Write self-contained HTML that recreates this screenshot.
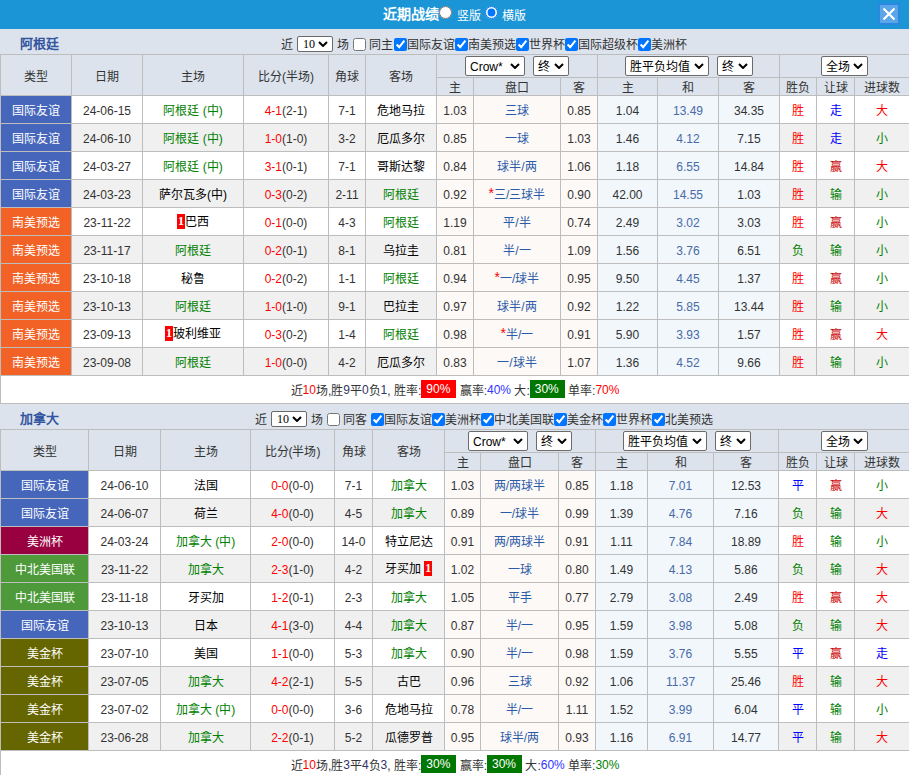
<!DOCTYPE html>
<html lang="zh-CN"><head><meta charset="utf-8"><style>
*{box-sizing:border-box}
html,body{margin:0;padding:0}
body{width:909px;height:775px;overflow:hidden;position:relative;background:#fff;font-family:"Liberation Sans",sans-serif;font-size:12px;color:#333}
.c{position:absolute;border:1px solid #bdbdbd;display:flex;align-items:center;justify-content:center;white-space:nowrap;line-height:14px;padding-top:2px}
.blk{color:#000}
.rc{display:inline-block;background:#f00;color:#fff;font-family:'Liberation Serif',serif;font-weight:bold;font-size:12px;line-height:15px;width:8px;text-align:center;position:relative;top:-1px}
.top{position:absolute;left:0;top:0;width:909px;height:29px;background:#1b95d6;color:#fff}
.ttl{position:absolute;left:383px;top:5px;font-size:14px;font-weight:bold;line-height:18px}
.bar{position:absolute;left:0;width:909px;height:25px;background:#dce3ec}
.tn{position:absolute;left:20px;top:7px;font-size:13px;font-weight:bold;color:#3355a0;line-height:16px}
.flt{position:absolute;top:2px;height:26px;display:flex;align-items:center;white-space:pre;color:#333}
.sel{flex-shrink:0;display:inline-flex;align-items:center;justify-content:flex-start;height:20px;border:1px solid #6b6b6b;border-radius:2px;padding-top:2px;background:#fff;color:#000;padding-left:4px;position:relative;font-size:12px}
.sel svg{position:absolute;right:4px;top:50%;width:10px;height:6px;margin-top:-3px}
input[type=checkbox]{margin:0;width:13px;height:13px;flex-shrink:0}
.sum{position:absolute;left:0;width:910px;height:29px;border:1px solid #bdbdbd;display:flex;align-items:center;justify-content:center;white-space:pre;color:#333}
.t{position:relative;top:-1px}
.ast{color:#f00;font-size:14px;position:relative;top:-2px}
.r{color:#f00}.n{color:#336}
.box{display:inline-block;color:#fff;padding:0 6px 0 5px;line-height:18px;position:relative;top:-1px}
.x{position:absolute;left:878px;top:3px;width:22px;height:22px;background:#5ba5e9;border:2px solid #2a88e0}
</style></head><body>
<div class="top"><span class="ttl">近期战绩</span><input type="radio" style="position:absolute;left:439px;top:6px;margin:0;width:13px;height:13px"><span style="position:absolute;left:457px;top:9px;line-height:14px">竖版</span><input type="radio" checked style="position:absolute;left:485px;top:6px;margin:0;width:13px;height:13px"><span style="position:absolute;left:502px;top:9px;line-height:14px">横版</span><div class="x"><svg width="18" height="18" viewBox="0 0 18 18" style="position:absolute;left:0;top:0"><path d="M3.5 3.5L14.5 14.5M14.5 3.5L3.5 14.5" stroke="#fff" stroke-width="2.2"/></svg></div></div>
<div class="bar" style="top:29px"><span class="tn">阿根廷</span><div class="flt" style="left:281px"><span class="t">近</span><span class="sel" style="margin-left:4px;width:36px;height:16px;font-family:'Liberation Serif',serif;font-size:12px;padding-top:1px;padding-left:5px">10<svg width="10" height="6"><path d="M1 1L5 5L9 1" fill="none" stroke="#000" stroke-width="2"/></svg></span><span class="t" style="margin-left:4px">场</span><input type="checkbox" style="margin-left:4px"><span class="t" style="margin-left:3px">同主</span><input type="checkbox" checked style="margin-left:1px"><span class="t">国际友谊</span><input type="checkbox" checked style="margin-left:0px"><span class="t">南美预选</span><input type="checkbox" checked style="margin-left:0px"><span class="t">世界杯</span><input type="checkbox" checked style="margin-left:0px"><span class="t">国际超级杯</span><input type="checkbox" checked style="margin-left:0px"><span class="t">美洲杯</span></div></div>
<div class="c" style="left:0px;top:54px;width:72px;height:42px;background:#dce3ec;color:#333;padding-top:3px">类型</div><div class="c" style="left:71px;top:54px;width:72px;height:42px;background:#dce3ec;color:#333;padding-top:3px">日期</div><div class="c" style="left:142px;top:54px;width:102px;height:42px;background:#dce3ec;color:#333;padding-top:3px">主场</div><div class="c" style="left:243px;top:54px;width:86px;height:42px;background:#dce3ec;color:#333;padding-top:3px">比分(半场)</div><div class="c" style="left:328px;top:54px;width:38px;height:42px;background:#dce3ec;color:#333;padding-top:3px">角球</div><div class="c" style="left:365px;top:54px;width:72px;height:42px;background:#dce3ec;color:#333;padding-top:3px">客场</div><div class="c" style="left:436px;top:54px;width:162px;height:24px;background:#dce3ec;padding-top:0;"><span class="sel" style="width:60px">Crow*<svg width="10" height="6"><path d="M1 1L5 5L9 1" fill="none" stroke="#000" stroke-width="2"/></svg></span><span class="sel" style="width:36px;margin-left:8px">终<svg width="10" height="6"><path d="M1 1L5 5L9 1" fill="none" stroke="#000" stroke-width="2"/></svg></span></div><div class="c" style="left:597px;top:54px;width:183px;height:24px;background:#dce3ec;padding-top:0;"><span class="sel" style="width:84px">胜平负均值<svg width="10" height="6"><path d="M1 1L5 5L9 1" fill="none" stroke="#000" stroke-width="2"/></svg></span><span class="sel" style="width:36px;margin-left:8px">终<svg width="10" height="6"><path d="M1 1L5 5L9 1" fill="none" stroke="#000" stroke-width="2"/></svg></span></div><div class="c" style="left:779px;top:54px;width:131px;height:24px;background:#dce3ec;padding-top:0;"><span class="sel" style="width:47px">全场<svg width="10" height="6"><path d="M1 1L5 5L9 1" fill="none" stroke="#000" stroke-width="2"/></svg></span></div><div class="c" style="left:436px;top:77px;width:38px;height:19px;background:#dce3ec;color:#333;padding-top:2px">主</div><div class="c" style="left:473px;top:77px;width:88px;height:19px;background:#dce3ec;color:#333;padding-top:2px">盘口</div><div class="c" style="left:560px;top:77px;width:38px;height:19px;background:#dce3ec;color:#333;padding-top:2px">客</div><div class="c" style="left:597px;top:77px;width:61px;height:19px;background:#dce3ec;color:#333;padding-top:2px">主</div><div class="c" style="left:657px;top:77px;width:62px;height:19px;background:#dce3ec;color:#333;padding-top:2px">和</div><div class="c" style="left:718px;top:77px;width:62px;height:19px;background:#dce3ec;color:#333;padding-top:2px">客</div><div class="c" style="left:779px;top:77px;width:38px;height:19px;background:#dce3ec;color:#333;padding-top:2px">胜负</div><div class="c" style="left:816px;top:77px;width:39px;height:19px;background:#dce3ec;color:#333;padding-top:2px">让球</div><div class="c" style="left:854px;top:77px;width:56px;height:19px;background:#dce3ec;color:#333;padding-top:2px">进球数</div><div class="c" style="left:0px;top:95px;width:72px;height:29px;background:#4666bb;color:#fff">国际友谊</div><div class="c" style="left:71px;top:95px;width:72px;height:29px;background:#ffffff;color:#333">24-06-15</div><div class="c" style="left:142px;top:95px;width:102px;height:29px;background:#ffffff;"><span style="color:#008000">阿根廷 (中)</span></div><div class="c" style="left:243px;top:95px;width:86px;height:29px;background:#ffffff;color:#333"><span style="color:#f00">4-1</span>(2-1)</div><div class="c" style="left:328px;top:95px;width:38px;height:29px;background:#ffffff;color:#333">7-1</div><div class="c" style="left:365px;top:95px;width:72px;height:29px;background:#ffffff;"><span class="blk">危地马拉</span></div><div class="c" style="left:436px;top:95px;width:38px;height:29px;background:#fdf9f6;color:#333">1.03</div><div class="c" style="left:473px;top:95px;width:88px;height:29px;background:#fdf9f6;color:#2a5aa8">三球</div><div class="c" style="left:560px;top:95px;width:38px;height:29px;background:#fdf9f6;color:#333">0.85</div><div class="c" style="left:597px;top:95px;width:61px;height:29px;background:#f1f7fb;color:#333">1.04</div><div class="c" style="left:657px;top:95px;width:62px;height:29px;background:#f1f7fb;color:#4a6aa8">13.49</div><div class="c" style="left:718px;top:95px;width:62px;height:29px;background:#f1f7fb;color:#333">34.35</div><div class="c" style="left:779px;top:95px;width:38px;height:29px;background:#ffffff;color:#ff0000">胜</div><div class="c" style="left:816px;top:95px;width:39px;height:29px;background:#ffffff;color:#0000ff">走</div><div class="c" style="left:854px;top:95px;width:56px;height:29px;background:#ffffff;color:#ff0000">大</div><div class="c" style="left:0px;top:123px;width:72px;height:29px;background:#4666bb;color:#fff">国际友谊</div><div class="c" style="left:71px;top:123px;width:72px;height:29px;background:#f0f0f0;color:#333">24-06-10</div><div class="c" style="left:142px;top:123px;width:102px;height:29px;background:#f0f0f0;"><span style="color:#008000">阿根廷 (中)</span></div><div class="c" style="left:243px;top:123px;width:86px;height:29px;background:#f0f0f0;color:#333"><span style="color:#f00">1-0</span>(1-0)</div><div class="c" style="left:328px;top:123px;width:38px;height:29px;background:#f0f0f0;color:#333">3-2</div><div class="c" style="left:365px;top:123px;width:72px;height:29px;background:#f0f0f0;"><span class="blk">厄瓜多尔</span></div><div class="c" style="left:436px;top:123px;width:38px;height:29px;background:#fdf9f6;color:#333">0.85</div><div class="c" style="left:473px;top:123px;width:88px;height:29px;background:#fdf9f6;color:#2a5aa8">一球</div><div class="c" style="left:560px;top:123px;width:38px;height:29px;background:#fdf9f6;color:#333">1.03</div><div class="c" style="left:597px;top:123px;width:61px;height:29px;background:#f1f7fb;color:#333">1.46</div><div class="c" style="left:657px;top:123px;width:62px;height:29px;background:#f1f7fb;color:#4a6aa8">4.12</div><div class="c" style="left:718px;top:123px;width:62px;height:29px;background:#f1f7fb;color:#333">7.15</div><div class="c" style="left:779px;top:123px;width:38px;height:29px;background:#f0f0f0;color:#ff0000">胜</div><div class="c" style="left:816px;top:123px;width:39px;height:29px;background:#f0f0f0;color:#0000ff">走</div><div class="c" style="left:854px;top:123px;width:56px;height:29px;background:#f0f0f0;color:#008000">小</div><div class="c" style="left:0px;top:151px;width:72px;height:29px;background:#4666bb;color:#fff">国际友谊</div><div class="c" style="left:71px;top:151px;width:72px;height:29px;background:#ffffff;color:#333">24-03-27</div><div class="c" style="left:142px;top:151px;width:102px;height:29px;background:#ffffff;"><span style="color:#008000">阿根廷 (中)</span></div><div class="c" style="left:243px;top:151px;width:86px;height:29px;background:#ffffff;color:#333"><span style="color:#f00">3-1</span>(0-1)</div><div class="c" style="left:328px;top:151px;width:38px;height:29px;background:#ffffff;color:#333">7-1</div><div class="c" style="left:365px;top:151px;width:72px;height:29px;background:#ffffff;"><span class="blk">哥斯达黎</span></div><div class="c" style="left:436px;top:151px;width:38px;height:29px;background:#fdf9f6;color:#333">0.84</div><div class="c" style="left:473px;top:151px;width:88px;height:29px;background:#fdf9f6;color:#2a5aa8">球半/两</div><div class="c" style="left:560px;top:151px;width:38px;height:29px;background:#fdf9f6;color:#333">1.06</div><div class="c" style="left:597px;top:151px;width:61px;height:29px;background:#f1f7fb;color:#333">1.18</div><div class="c" style="left:657px;top:151px;width:62px;height:29px;background:#f1f7fb;color:#4a6aa8">6.55</div><div class="c" style="left:718px;top:151px;width:62px;height:29px;background:#f1f7fb;color:#333">14.84</div><div class="c" style="left:779px;top:151px;width:38px;height:29px;background:#ffffff;color:#ff0000">胜</div><div class="c" style="left:816px;top:151px;width:39px;height:29px;background:#ffffff;color:#cc0000">赢</div><div class="c" style="left:854px;top:151px;width:56px;height:29px;background:#ffffff;color:#ff0000">大</div><div class="c" style="left:0px;top:179px;width:72px;height:29px;background:#4666bb;color:#fff">国际友谊</div><div class="c" style="left:71px;top:179px;width:72px;height:29px;background:#f0f0f0;color:#333">24-03-23</div><div class="c" style="left:142px;top:179px;width:102px;height:29px;background:#f0f0f0;"><span class="blk">萨尔瓦多(中)</span></div><div class="c" style="left:243px;top:179px;width:86px;height:29px;background:#f0f0f0;color:#333"><span style="color:#f00">0-3</span>(0-2)</div><div class="c" style="left:328px;top:179px;width:38px;height:29px;background:#f0f0f0;color:#333">2-11</div><div class="c" style="left:365px;top:179px;width:72px;height:29px;background:#f0f0f0;"><span style="color:#008000">阿根廷</span></div><div class="c" style="left:436px;top:179px;width:38px;height:29px;background:#fdf9f6;color:#333">0.92</div><div class="c" style="left:473px;top:179px;width:88px;height:29px;background:#fdf9f6;color:#2a5aa8"><span class="ast">*</span>三/三球半</div><div class="c" style="left:560px;top:179px;width:38px;height:29px;background:#fdf9f6;color:#333">0.90</div><div class="c" style="left:597px;top:179px;width:61px;height:29px;background:#f1f7fb;color:#333">42.00</div><div class="c" style="left:657px;top:179px;width:62px;height:29px;background:#f1f7fb;color:#4a6aa8">14.55</div><div class="c" style="left:718px;top:179px;width:62px;height:29px;background:#f1f7fb;color:#333">1.03</div><div class="c" style="left:779px;top:179px;width:38px;height:29px;background:#f0f0f0;color:#ff0000">胜</div><div class="c" style="left:816px;top:179px;width:39px;height:29px;background:#f0f0f0;color:#008000">输</div><div class="c" style="left:854px;top:179px;width:56px;height:29px;background:#f0f0f0;color:#008000">小</div><div class="c" style="left:0px;top:207px;width:72px;height:29px;background:#f26125;color:#fff">南美预选</div><div class="c" style="left:71px;top:207px;width:72px;height:29px;background:#ffffff;color:#333">23-11-22</div><div class="c" style="left:142px;top:207px;width:102px;height:29px;background:#ffffff;"><span class="blk"><span class="rc">1</span>巴西</span></div><div class="c" style="left:243px;top:207px;width:86px;height:29px;background:#ffffff;color:#333"><span style="color:#f00">0-1</span>(0-0)</div><div class="c" style="left:328px;top:207px;width:38px;height:29px;background:#ffffff;color:#333">4-3</div><div class="c" style="left:365px;top:207px;width:72px;height:29px;background:#ffffff;"><span style="color:#008000">阿根廷</span></div><div class="c" style="left:436px;top:207px;width:38px;height:29px;background:#fdf9f6;color:#333">1.19</div><div class="c" style="left:473px;top:207px;width:88px;height:29px;background:#fdf9f6;color:#2a5aa8">平/半</div><div class="c" style="left:560px;top:207px;width:38px;height:29px;background:#fdf9f6;color:#333">0.74</div><div class="c" style="left:597px;top:207px;width:61px;height:29px;background:#f1f7fb;color:#333">2.49</div><div class="c" style="left:657px;top:207px;width:62px;height:29px;background:#f1f7fb;color:#4a6aa8">3.02</div><div class="c" style="left:718px;top:207px;width:62px;height:29px;background:#f1f7fb;color:#333">3.03</div><div class="c" style="left:779px;top:207px;width:38px;height:29px;background:#ffffff;color:#ff0000">胜</div><div class="c" style="left:816px;top:207px;width:39px;height:29px;background:#ffffff;color:#cc0000">赢</div><div class="c" style="left:854px;top:207px;width:56px;height:29px;background:#ffffff;color:#008000">小</div><div class="c" style="left:0px;top:235px;width:72px;height:29px;background:#f26125;color:#fff">南美预选</div><div class="c" style="left:71px;top:235px;width:72px;height:29px;background:#f0f0f0;color:#333">23-11-17</div><div class="c" style="left:142px;top:235px;width:102px;height:29px;background:#f0f0f0;"><span style="color:#008000">阿根廷</span></div><div class="c" style="left:243px;top:235px;width:86px;height:29px;background:#f0f0f0;color:#333"><span style="color:#f00">0-2</span>(0-1)</div><div class="c" style="left:328px;top:235px;width:38px;height:29px;background:#f0f0f0;color:#333">8-1</div><div class="c" style="left:365px;top:235px;width:72px;height:29px;background:#f0f0f0;"><span class="blk">乌拉圭</span></div><div class="c" style="left:436px;top:235px;width:38px;height:29px;background:#fdf9f6;color:#333">0.81</div><div class="c" style="left:473px;top:235px;width:88px;height:29px;background:#fdf9f6;color:#2a5aa8">半/一</div><div class="c" style="left:560px;top:235px;width:38px;height:29px;background:#fdf9f6;color:#333">1.09</div><div class="c" style="left:597px;top:235px;width:61px;height:29px;background:#f1f7fb;color:#333">1.56</div><div class="c" style="left:657px;top:235px;width:62px;height:29px;background:#f1f7fb;color:#4a6aa8">3.76</div><div class="c" style="left:718px;top:235px;width:62px;height:29px;background:#f1f7fb;color:#333">6.51</div><div class="c" style="left:779px;top:235px;width:38px;height:29px;background:#f0f0f0;color:#008000">负</div><div class="c" style="left:816px;top:235px;width:39px;height:29px;background:#f0f0f0;color:#008000">输</div><div class="c" style="left:854px;top:235px;width:56px;height:29px;background:#f0f0f0;color:#008000">小</div><div class="c" style="left:0px;top:263px;width:72px;height:29px;background:#f26125;color:#fff">南美预选</div><div class="c" style="left:71px;top:263px;width:72px;height:29px;background:#ffffff;color:#333">23-10-18</div><div class="c" style="left:142px;top:263px;width:102px;height:29px;background:#ffffff;"><span class="blk">秘鲁</span></div><div class="c" style="left:243px;top:263px;width:86px;height:29px;background:#ffffff;color:#333"><span style="color:#f00">0-2</span>(0-2)</div><div class="c" style="left:328px;top:263px;width:38px;height:29px;background:#ffffff;color:#333">1-1</div><div class="c" style="left:365px;top:263px;width:72px;height:29px;background:#ffffff;"><span style="color:#008000">阿根廷</span></div><div class="c" style="left:436px;top:263px;width:38px;height:29px;background:#fdf9f6;color:#333">0.94</div><div class="c" style="left:473px;top:263px;width:88px;height:29px;background:#fdf9f6;color:#2a5aa8"><span class="ast">*</span>一/球半</div><div class="c" style="left:560px;top:263px;width:38px;height:29px;background:#fdf9f6;color:#333">0.95</div><div class="c" style="left:597px;top:263px;width:61px;height:29px;background:#f1f7fb;color:#333">9.50</div><div class="c" style="left:657px;top:263px;width:62px;height:29px;background:#f1f7fb;color:#4a6aa8">4.45</div><div class="c" style="left:718px;top:263px;width:62px;height:29px;background:#f1f7fb;color:#333">1.37</div><div class="c" style="left:779px;top:263px;width:38px;height:29px;background:#ffffff;color:#ff0000">胜</div><div class="c" style="left:816px;top:263px;width:39px;height:29px;background:#ffffff;color:#cc0000">赢</div><div class="c" style="left:854px;top:263px;width:56px;height:29px;background:#ffffff;color:#008000">小</div><div class="c" style="left:0px;top:291px;width:72px;height:29px;background:#f26125;color:#fff">南美预选</div><div class="c" style="left:71px;top:291px;width:72px;height:29px;background:#f0f0f0;color:#333">23-10-13</div><div class="c" style="left:142px;top:291px;width:102px;height:29px;background:#f0f0f0;"><span style="color:#008000">阿根廷</span></div><div class="c" style="left:243px;top:291px;width:86px;height:29px;background:#f0f0f0;color:#333"><span style="color:#f00">1-0</span>(1-0)</div><div class="c" style="left:328px;top:291px;width:38px;height:29px;background:#f0f0f0;color:#333">9-1</div><div class="c" style="left:365px;top:291px;width:72px;height:29px;background:#f0f0f0;"><span class="blk">巴拉圭</span></div><div class="c" style="left:436px;top:291px;width:38px;height:29px;background:#fdf9f6;color:#333">0.97</div><div class="c" style="left:473px;top:291px;width:88px;height:29px;background:#fdf9f6;color:#2a5aa8">球半/两</div><div class="c" style="left:560px;top:291px;width:38px;height:29px;background:#fdf9f6;color:#333">0.92</div><div class="c" style="left:597px;top:291px;width:61px;height:29px;background:#f1f7fb;color:#333">1.22</div><div class="c" style="left:657px;top:291px;width:62px;height:29px;background:#f1f7fb;color:#4a6aa8">5.85</div><div class="c" style="left:718px;top:291px;width:62px;height:29px;background:#f1f7fb;color:#333">13.44</div><div class="c" style="left:779px;top:291px;width:38px;height:29px;background:#f0f0f0;color:#ff0000">胜</div><div class="c" style="left:816px;top:291px;width:39px;height:29px;background:#f0f0f0;color:#008000">输</div><div class="c" style="left:854px;top:291px;width:56px;height:29px;background:#f0f0f0;color:#008000">小</div><div class="c" style="left:0px;top:319px;width:72px;height:29px;background:#f26125;color:#fff">南美预选</div><div class="c" style="left:71px;top:319px;width:72px;height:29px;background:#ffffff;color:#333">23-09-13</div><div class="c" style="left:142px;top:319px;width:102px;height:29px;background:#ffffff;"><span class="blk"><span class="rc">1</span>玻利维亚</span></div><div class="c" style="left:243px;top:319px;width:86px;height:29px;background:#ffffff;color:#333"><span style="color:#f00">0-3</span>(0-2)</div><div class="c" style="left:328px;top:319px;width:38px;height:29px;background:#ffffff;color:#333">1-4</div><div class="c" style="left:365px;top:319px;width:72px;height:29px;background:#ffffff;"><span style="color:#008000">阿根廷</span></div><div class="c" style="left:436px;top:319px;width:38px;height:29px;background:#fdf9f6;color:#333">0.98</div><div class="c" style="left:473px;top:319px;width:88px;height:29px;background:#fdf9f6;color:#2a5aa8"><span class="ast">*</span>半/一</div><div class="c" style="left:560px;top:319px;width:38px;height:29px;background:#fdf9f6;color:#333">0.91</div><div class="c" style="left:597px;top:319px;width:61px;height:29px;background:#f1f7fb;color:#333">5.90</div><div class="c" style="left:657px;top:319px;width:62px;height:29px;background:#f1f7fb;color:#4a6aa8">3.93</div><div class="c" style="left:718px;top:319px;width:62px;height:29px;background:#f1f7fb;color:#333">1.57</div><div class="c" style="left:779px;top:319px;width:38px;height:29px;background:#ffffff;color:#ff0000">胜</div><div class="c" style="left:816px;top:319px;width:39px;height:29px;background:#ffffff;color:#cc0000">赢</div><div class="c" style="left:854px;top:319px;width:56px;height:29px;background:#ffffff;color:#ff0000">大</div><div class="c" style="left:0px;top:347px;width:72px;height:29px;background:#f26125;color:#fff">南美预选</div><div class="c" style="left:71px;top:347px;width:72px;height:29px;background:#f0f0f0;color:#333">23-09-08</div><div class="c" style="left:142px;top:347px;width:102px;height:29px;background:#f0f0f0;"><span style="color:#008000">阿根廷</span></div><div class="c" style="left:243px;top:347px;width:86px;height:29px;background:#f0f0f0;color:#333"><span style="color:#f00">1-0</span>(0-0)</div><div class="c" style="left:328px;top:347px;width:38px;height:29px;background:#f0f0f0;color:#333">4-2</div><div class="c" style="left:365px;top:347px;width:72px;height:29px;background:#f0f0f0;"><span class="blk">厄瓜多尔</span></div><div class="c" style="left:436px;top:347px;width:38px;height:29px;background:#fdf9f6;color:#333">0.83</div><div class="c" style="left:473px;top:347px;width:88px;height:29px;background:#fdf9f6;color:#2a5aa8">一/球半</div><div class="c" style="left:560px;top:347px;width:38px;height:29px;background:#fdf9f6;color:#333">1.07</div><div class="c" style="left:597px;top:347px;width:61px;height:29px;background:#f1f7fb;color:#333">1.36</div><div class="c" style="left:657px;top:347px;width:62px;height:29px;background:#f1f7fb;color:#4a6aa8">4.52</div><div class="c" style="left:718px;top:347px;width:62px;height:29px;background:#f1f7fb;color:#333">9.66</div><div class="c" style="left:779px;top:347px;width:38px;height:29px;background:#f0f0f0;color:#ff0000">胜</div><div class="c" style="left:816px;top:347px;width:39px;height:29px;background:#f0f0f0;color:#008000">输</div><div class="c" style="left:854px;top:347px;width:56px;height:29px;background:#f0f0f0;color:#008000">小</div><div class="c" style="left:0px;top:429px;width:89px;height:42px;background:#dce3ec;color:#333;padding-top:3px">类型</div><div class="c" style="left:88px;top:429px;width:73px;height:42px;background:#dce3ec;color:#333;padding-top:3px">日期</div><div class="c" style="left:160px;top:429px;width:91px;height:42px;background:#dce3ec;color:#333;padding-top:3px">主场</div><div class="c" style="left:250px;top:429px;width:85px;height:42px;background:#dce3ec;color:#333;padding-top:3px">比分(半场)</div><div class="c" style="left:334px;top:429px;width:39px;height:42px;background:#dce3ec;color:#333;padding-top:3px">角球</div><div class="c" style="left:372px;top:429px;width:73px;height:42px;background:#dce3ec;color:#333;padding-top:3px">客场</div><div class="c" style="left:444px;top:429px;width:152px;height:24px;background:#dce3ec;padding-top:0;"><span class="sel" style="width:60px">Crow*<svg width="10" height="6"><path d="M1 1L5 5L9 1" fill="none" stroke="#000" stroke-width="2"/></svg></span><span class="sel" style="width:36px;margin-left:8px">终<svg width="10" height="6"><path d="M1 1L5 5L9 1" fill="none" stroke="#000" stroke-width="2"/></svg></span></div><div class="c" style="left:595px;top:429px;width:184px;height:24px;background:#dce3ec;padding-top:0;"><span class="sel" style="width:84px">胜平负均值<svg width="10" height="6"><path d="M1 1L5 5L9 1" fill="none" stroke="#000" stroke-width="2"/></svg></span><span class="sel" style="width:36px;margin-left:8px">终<svg width="10" height="6"><path d="M1 1L5 5L9 1" fill="none" stroke="#000" stroke-width="2"/></svg></span></div><div class="c" style="left:778px;top:429px;width:132px;height:24px;background:#dce3ec;padding-top:0;"><span class="sel" style="width:47px">全场<svg width="10" height="6"><path d="M1 1L5 5L9 1" fill="none" stroke="#000" stroke-width="2"/></svg></span></div><div class="c" style="left:444px;top:452px;width:37px;height:19px;background:#dce3ec;color:#333;padding-top:2px">主</div><div class="c" style="left:480px;top:452px;width:79px;height:19px;background:#dce3ec;color:#333;padding-top:2px">盘口</div><div class="c" style="left:558px;top:452px;width:38px;height:19px;background:#dce3ec;color:#333;padding-top:2px">客</div><div class="c" style="left:595px;top:452px;width:53px;height:19px;background:#dce3ec;color:#333;padding-top:2px">主</div><div class="c" style="left:647px;top:452px;width:67px;height:19px;background:#dce3ec;color:#333;padding-top:2px">和</div><div class="c" style="left:713px;top:452px;width:66px;height:19px;background:#dce3ec;color:#333;padding-top:2px">客</div><div class="c" style="left:778px;top:452px;width:39px;height:19px;background:#dce3ec;color:#333;padding-top:2px">胜负</div><div class="c" style="left:816px;top:452px;width:39px;height:19px;background:#dce3ec;color:#333;padding-top:2px">让球</div><div class="c" style="left:854px;top:452px;width:56px;height:19px;background:#dce3ec;color:#333;padding-top:2px">进球数</div><div class="c" style="left:0px;top:470px;width:89px;height:29px;background:#4666bb;color:#fff">国际友谊</div><div class="c" style="left:88px;top:470px;width:73px;height:29px;background:#ffffff;color:#333">24-06-10</div><div class="c" style="left:160px;top:470px;width:91px;height:29px;background:#ffffff;"><span class="blk">法国</span></div><div class="c" style="left:250px;top:470px;width:85px;height:29px;background:#ffffff;color:#333"><span style="color:#f00">0-0</span>(0-0)</div><div class="c" style="left:334px;top:470px;width:39px;height:29px;background:#ffffff;color:#333">7-1</div><div class="c" style="left:372px;top:470px;width:73px;height:29px;background:#ffffff;"><span style="color:#008000">加拿大</span></div><div class="c" style="left:444px;top:470px;width:37px;height:29px;background:#fdf9f6;color:#333">1.03</div><div class="c" style="left:480px;top:470px;width:79px;height:29px;background:#fdf9f6;color:#2a5aa8">两/两球半</div><div class="c" style="left:558px;top:470px;width:38px;height:29px;background:#fdf9f6;color:#333">0.85</div><div class="c" style="left:595px;top:470px;width:53px;height:29px;background:#f1f7fb;color:#333">1.18</div><div class="c" style="left:647px;top:470px;width:67px;height:29px;background:#f1f7fb;color:#4a6aa8">7.01</div><div class="c" style="left:713px;top:470px;width:66px;height:29px;background:#f1f7fb;color:#333">12.53</div><div class="c" style="left:778px;top:470px;width:39px;height:29px;background:#ffffff;color:#0000ff">平</div><div class="c" style="left:816px;top:470px;width:39px;height:29px;background:#ffffff;color:#cc0000">赢</div><div class="c" style="left:854px;top:470px;width:56px;height:29px;background:#ffffff;color:#008000">小</div><div class="c" style="left:0px;top:498px;width:89px;height:29px;background:#4666bb;color:#fff">国际友谊</div><div class="c" style="left:88px;top:498px;width:73px;height:29px;background:#f0f0f0;color:#333">24-06-07</div><div class="c" style="left:160px;top:498px;width:91px;height:29px;background:#f0f0f0;"><span class="blk">荷兰</span></div><div class="c" style="left:250px;top:498px;width:85px;height:29px;background:#f0f0f0;color:#333"><span style="color:#f00">4-0</span>(0-0)</div><div class="c" style="left:334px;top:498px;width:39px;height:29px;background:#f0f0f0;color:#333">4-5</div><div class="c" style="left:372px;top:498px;width:73px;height:29px;background:#f0f0f0;"><span style="color:#008000">加拿大</span></div><div class="c" style="left:444px;top:498px;width:37px;height:29px;background:#fdf9f6;color:#333">0.89</div><div class="c" style="left:480px;top:498px;width:79px;height:29px;background:#fdf9f6;color:#2a5aa8">一/球半</div><div class="c" style="left:558px;top:498px;width:38px;height:29px;background:#fdf9f6;color:#333">0.99</div><div class="c" style="left:595px;top:498px;width:53px;height:29px;background:#f1f7fb;color:#333">1.39</div><div class="c" style="left:647px;top:498px;width:67px;height:29px;background:#f1f7fb;color:#4a6aa8">4.76</div><div class="c" style="left:713px;top:498px;width:66px;height:29px;background:#f1f7fb;color:#333">7.16</div><div class="c" style="left:778px;top:498px;width:39px;height:29px;background:#f0f0f0;color:#008000">负</div><div class="c" style="left:816px;top:498px;width:39px;height:29px;background:#f0f0f0;color:#008000">输</div><div class="c" style="left:854px;top:498px;width:56px;height:29px;background:#f0f0f0;color:#ff0000">大</div><div class="c" style="left:0px;top:526px;width:89px;height:29px;background:#990040;color:#fff">美洲杯</div><div class="c" style="left:88px;top:526px;width:73px;height:29px;background:#ffffff;color:#333">24-03-24</div><div class="c" style="left:160px;top:526px;width:91px;height:29px;background:#ffffff;"><span style="color:#008000">加拿大 (中)</span></div><div class="c" style="left:250px;top:526px;width:85px;height:29px;background:#ffffff;color:#333"><span style="color:#f00">2-0</span>(0-0)</div><div class="c" style="left:334px;top:526px;width:39px;height:29px;background:#ffffff;color:#333">14-0</div><div class="c" style="left:372px;top:526px;width:73px;height:29px;background:#ffffff;"><span class="blk">特立尼达</span></div><div class="c" style="left:444px;top:526px;width:37px;height:29px;background:#fdf9f6;color:#333">0.91</div><div class="c" style="left:480px;top:526px;width:79px;height:29px;background:#fdf9f6;color:#2a5aa8">两/两球半</div><div class="c" style="left:558px;top:526px;width:38px;height:29px;background:#fdf9f6;color:#333">0.91</div><div class="c" style="left:595px;top:526px;width:53px;height:29px;background:#f1f7fb;color:#333">1.11</div><div class="c" style="left:647px;top:526px;width:67px;height:29px;background:#f1f7fb;color:#4a6aa8">7.84</div><div class="c" style="left:713px;top:526px;width:66px;height:29px;background:#f1f7fb;color:#333">18.89</div><div class="c" style="left:778px;top:526px;width:39px;height:29px;background:#ffffff;color:#ff0000">胜</div><div class="c" style="left:816px;top:526px;width:39px;height:29px;background:#ffffff;color:#008000">输</div><div class="c" style="left:854px;top:526px;width:56px;height:29px;background:#ffffff;color:#008000">小</div><div class="c" style="left:0px;top:554px;width:89px;height:29px;background:#4e9a3a;color:#fff">中北美国联</div><div class="c" style="left:88px;top:554px;width:73px;height:29px;background:#f0f0f0;color:#333">23-11-22</div><div class="c" style="left:160px;top:554px;width:91px;height:29px;background:#f0f0f0;"><span style="color:#008000">加拿大</span></div><div class="c" style="left:250px;top:554px;width:85px;height:29px;background:#f0f0f0;color:#333"><span style="color:#f00">2-3</span>(1-0)</div><div class="c" style="left:334px;top:554px;width:39px;height:29px;background:#f0f0f0;color:#333">4-2</div><div class="c" style="left:372px;top:554px;width:73px;height:29px;background:#f0f0f0;"><span class="blk">牙买加 <span class="rc">1</span></span></div><div class="c" style="left:444px;top:554px;width:37px;height:29px;background:#fdf9f6;color:#333">1.02</div><div class="c" style="left:480px;top:554px;width:79px;height:29px;background:#fdf9f6;color:#2a5aa8">一球</div><div class="c" style="left:558px;top:554px;width:38px;height:29px;background:#fdf9f6;color:#333">0.80</div><div class="c" style="left:595px;top:554px;width:53px;height:29px;background:#f1f7fb;color:#333">1.49</div><div class="c" style="left:647px;top:554px;width:67px;height:29px;background:#f1f7fb;color:#4a6aa8">4.13</div><div class="c" style="left:713px;top:554px;width:66px;height:29px;background:#f1f7fb;color:#333">5.86</div><div class="c" style="left:778px;top:554px;width:39px;height:29px;background:#f0f0f0;color:#008000">负</div><div class="c" style="left:816px;top:554px;width:39px;height:29px;background:#f0f0f0;color:#008000">输</div><div class="c" style="left:854px;top:554px;width:56px;height:29px;background:#f0f0f0;color:#ff0000">大</div><div class="c" style="left:0px;top:582px;width:89px;height:29px;background:#4e9a3a;color:#fff">中北美国联</div><div class="c" style="left:88px;top:582px;width:73px;height:29px;background:#ffffff;color:#333">23-11-18</div><div class="c" style="left:160px;top:582px;width:91px;height:29px;background:#ffffff;"><span class="blk">牙买加</span></div><div class="c" style="left:250px;top:582px;width:85px;height:29px;background:#ffffff;color:#333"><span style="color:#f00">1-2</span>(0-1)</div><div class="c" style="left:334px;top:582px;width:39px;height:29px;background:#ffffff;color:#333">2-3</div><div class="c" style="left:372px;top:582px;width:73px;height:29px;background:#ffffff;"><span style="color:#008000">加拿大</span></div><div class="c" style="left:444px;top:582px;width:37px;height:29px;background:#fdf9f6;color:#333">1.05</div><div class="c" style="left:480px;top:582px;width:79px;height:29px;background:#fdf9f6;color:#2a5aa8">平手</div><div class="c" style="left:558px;top:582px;width:38px;height:29px;background:#fdf9f6;color:#333">0.77</div><div class="c" style="left:595px;top:582px;width:53px;height:29px;background:#f1f7fb;color:#333">2.79</div><div class="c" style="left:647px;top:582px;width:67px;height:29px;background:#f1f7fb;color:#4a6aa8">3.08</div><div class="c" style="left:713px;top:582px;width:66px;height:29px;background:#f1f7fb;color:#333">2.49</div><div class="c" style="left:778px;top:582px;width:39px;height:29px;background:#ffffff;color:#ff0000">胜</div><div class="c" style="left:816px;top:582px;width:39px;height:29px;background:#ffffff;color:#cc0000">赢</div><div class="c" style="left:854px;top:582px;width:56px;height:29px;background:#ffffff;color:#ff0000">大</div><div class="c" style="left:0px;top:610px;width:89px;height:29px;background:#4666bb;color:#fff">国际友谊</div><div class="c" style="left:88px;top:610px;width:73px;height:29px;background:#f0f0f0;color:#333">23-10-13</div><div class="c" style="left:160px;top:610px;width:91px;height:29px;background:#f0f0f0;"><span class="blk">日本</span></div><div class="c" style="left:250px;top:610px;width:85px;height:29px;background:#f0f0f0;color:#333"><span style="color:#f00">4-1</span>(3-0)</div><div class="c" style="left:334px;top:610px;width:39px;height:29px;background:#f0f0f0;color:#333">4-4</div><div class="c" style="left:372px;top:610px;width:73px;height:29px;background:#f0f0f0;"><span style="color:#008000">加拿大</span></div><div class="c" style="left:444px;top:610px;width:37px;height:29px;background:#fdf9f6;color:#333">0.87</div><div class="c" style="left:480px;top:610px;width:79px;height:29px;background:#fdf9f6;color:#2a5aa8">半/一</div><div class="c" style="left:558px;top:610px;width:38px;height:29px;background:#fdf9f6;color:#333">0.95</div><div class="c" style="left:595px;top:610px;width:53px;height:29px;background:#f1f7fb;color:#333">1.59</div><div class="c" style="left:647px;top:610px;width:67px;height:29px;background:#f1f7fb;color:#4a6aa8">3.98</div><div class="c" style="left:713px;top:610px;width:66px;height:29px;background:#f1f7fb;color:#333">5.08</div><div class="c" style="left:778px;top:610px;width:39px;height:29px;background:#f0f0f0;color:#008000">负</div><div class="c" style="left:816px;top:610px;width:39px;height:29px;background:#f0f0f0;color:#008000">输</div><div class="c" style="left:854px;top:610px;width:56px;height:29px;background:#f0f0f0;color:#ff0000">大</div><div class="c" style="left:0px;top:638px;width:89px;height:29px;background:#666600;color:#fff">美金杯</div><div class="c" style="left:88px;top:638px;width:73px;height:29px;background:#ffffff;color:#333">23-07-10</div><div class="c" style="left:160px;top:638px;width:91px;height:29px;background:#ffffff;"><span class="blk">美国</span></div><div class="c" style="left:250px;top:638px;width:85px;height:29px;background:#ffffff;color:#333"><span style="color:#f00">1-1</span>(0-0)</div><div class="c" style="left:334px;top:638px;width:39px;height:29px;background:#ffffff;color:#333">5-3</div><div class="c" style="left:372px;top:638px;width:73px;height:29px;background:#ffffff;"><span style="color:#008000">加拿大</span></div><div class="c" style="left:444px;top:638px;width:37px;height:29px;background:#fdf9f6;color:#333">0.90</div><div class="c" style="left:480px;top:638px;width:79px;height:29px;background:#fdf9f6;color:#2a5aa8">半/一</div><div class="c" style="left:558px;top:638px;width:38px;height:29px;background:#fdf9f6;color:#333">0.98</div><div class="c" style="left:595px;top:638px;width:53px;height:29px;background:#f1f7fb;color:#333">1.59</div><div class="c" style="left:647px;top:638px;width:67px;height:29px;background:#f1f7fb;color:#4a6aa8">3.76</div><div class="c" style="left:713px;top:638px;width:66px;height:29px;background:#f1f7fb;color:#333">5.55</div><div class="c" style="left:778px;top:638px;width:39px;height:29px;background:#ffffff;color:#0000ff">平</div><div class="c" style="left:816px;top:638px;width:39px;height:29px;background:#ffffff;color:#cc0000">赢</div><div class="c" style="left:854px;top:638px;width:56px;height:29px;background:#ffffff;color:#0000ff">走</div><div class="c" style="left:0px;top:666px;width:89px;height:29px;background:#666600;color:#fff">美金杯</div><div class="c" style="left:88px;top:666px;width:73px;height:29px;background:#f0f0f0;color:#333">23-07-05</div><div class="c" style="left:160px;top:666px;width:91px;height:29px;background:#f0f0f0;"><span style="color:#008000">加拿大</span></div><div class="c" style="left:250px;top:666px;width:85px;height:29px;background:#f0f0f0;color:#333"><span style="color:#f00">4-2</span>(2-1)</div><div class="c" style="left:334px;top:666px;width:39px;height:29px;background:#f0f0f0;color:#333">5-5</div><div class="c" style="left:372px;top:666px;width:73px;height:29px;background:#f0f0f0;"><span class="blk">古巴</span></div><div class="c" style="left:444px;top:666px;width:37px;height:29px;background:#fdf9f6;color:#333">0.96</div><div class="c" style="left:480px;top:666px;width:79px;height:29px;background:#fdf9f6;color:#2a5aa8">三球</div><div class="c" style="left:558px;top:666px;width:38px;height:29px;background:#fdf9f6;color:#333">0.92</div><div class="c" style="left:595px;top:666px;width:53px;height:29px;background:#f1f7fb;color:#333">1.06</div><div class="c" style="left:647px;top:666px;width:67px;height:29px;background:#f1f7fb;color:#4a6aa8">11.37</div><div class="c" style="left:713px;top:666px;width:66px;height:29px;background:#f1f7fb;color:#333">25.46</div><div class="c" style="left:778px;top:666px;width:39px;height:29px;background:#f0f0f0;color:#ff0000">胜</div><div class="c" style="left:816px;top:666px;width:39px;height:29px;background:#f0f0f0;color:#008000">输</div><div class="c" style="left:854px;top:666px;width:56px;height:29px;background:#f0f0f0;color:#ff0000">大</div><div class="c" style="left:0px;top:694px;width:89px;height:29px;background:#666600;color:#fff">美金杯</div><div class="c" style="left:88px;top:694px;width:73px;height:29px;background:#ffffff;color:#333">23-07-02</div><div class="c" style="left:160px;top:694px;width:91px;height:29px;background:#ffffff;"><span style="color:#008000">加拿大 (中)</span></div><div class="c" style="left:250px;top:694px;width:85px;height:29px;background:#ffffff;color:#333"><span style="color:#f00">0-0</span>(0-0)</div><div class="c" style="left:334px;top:694px;width:39px;height:29px;background:#ffffff;color:#333">3-6</div><div class="c" style="left:372px;top:694px;width:73px;height:29px;background:#ffffff;"><span class="blk">危地马拉</span></div><div class="c" style="left:444px;top:694px;width:37px;height:29px;background:#fdf9f6;color:#333">0.78</div><div class="c" style="left:480px;top:694px;width:79px;height:29px;background:#fdf9f6;color:#2a5aa8">半/一</div><div class="c" style="left:558px;top:694px;width:38px;height:29px;background:#fdf9f6;color:#333">1.11</div><div class="c" style="left:595px;top:694px;width:53px;height:29px;background:#f1f7fb;color:#333">1.52</div><div class="c" style="left:647px;top:694px;width:67px;height:29px;background:#f1f7fb;color:#4a6aa8">3.99</div><div class="c" style="left:713px;top:694px;width:66px;height:29px;background:#f1f7fb;color:#333">6.04</div><div class="c" style="left:778px;top:694px;width:39px;height:29px;background:#ffffff;color:#0000ff">平</div><div class="c" style="left:816px;top:694px;width:39px;height:29px;background:#ffffff;color:#008000">输</div><div class="c" style="left:854px;top:694px;width:56px;height:29px;background:#ffffff;color:#008000">小</div><div class="c" style="left:0px;top:722px;width:89px;height:29px;background:#666600;color:#fff">美金杯</div><div class="c" style="left:88px;top:722px;width:73px;height:29px;background:#f0f0f0;color:#333">23-06-28</div><div class="c" style="left:160px;top:722px;width:91px;height:29px;background:#f0f0f0;"><span style="color:#008000">加拿大</span></div><div class="c" style="left:250px;top:722px;width:85px;height:29px;background:#f0f0f0;color:#333"><span style="color:#f00">2-2</span>(0-1)</div><div class="c" style="left:334px;top:722px;width:39px;height:29px;background:#f0f0f0;color:#333">5-2</div><div class="c" style="left:372px;top:722px;width:73px;height:29px;background:#f0f0f0;"><span class="blk">瓜德罗普</span></div><div class="c" style="left:444px;top:722px;width:37px;height:29px;background:#fdf9f6;color:#333">0.95</div><div class="c" style="left:480px;top:722px;width:79px;height:29px;background:#fdf9f6;color:#2a5aa8">球半/两</div><div class="c" style="left:558px;top:722px;width:38px;height:29px;background:#fdf9f6;color:#333">0.93</div><div class="c" style="left:595px;top:722px;width:53px;height:29px;background:#f1f7fb;color:#333">1.16</div><div class="c" style="left:647px;top:722px;width:67px;height:29px;background:#f1f7fb;color:#4a6aa8">6.91</div><div class="c" style="left:713px;top:722px;width:66px;height:29px;background:#f1f7fb;color:#333">14.77</div><div class="c" style="left:778px;top:722px;width:39px;height:29px;background:#f0f0f0;color:#0000ff">平</div><div class="c" style="left:816px;top:722px;width:39px;height:29px;background:#f0f0f0;color:#008000">输</div><div class="c" style="left:854px;top:722px;width:56px;height:29px;background:#f0f0f0;color:#ff0000">大</div>
<div class="sum" style="top:375px">近<span class="r">10</span>场,胜<span class="n">9</span>平<span class="n">0</span>负<span class="n">1</span>, 胜率:<span class="box" style="background:#ff0000">90%</span> 赢率:<span style="color:#3333ff">40%</span> 大:<span class="box" style="background:#007700">30%</span> 单率:<span class="r">70%</span></div>
<div class="bar" style="top:404px"><span class="tn">加拿大</span><div class="flt" style="left:255px"><span class="t">近</span><span class="sel" style="margin-left:4px;width:36px;height:16px;font-family:'Liberation Serif',serif;font-size:12px;padding-top:1px;padding-left:5px">10<svg width="10" height="6"><path d="M1 1L5 5L9 1" fill="none" stroke="#000" stroke-width="2"/></svg></span><span class="t" style="margin-left:4px">场</span><input type="checkbox" style="margin-left:4px"><span class="t" style="margin-left:3px">同客</span><input type="checkbox" checked style="margin-left:4px"><span class="t">国际友谊</span><input type="checkbox" checked style="margin-left:0px"><span class="t">美洲杯</span><input type="checkbox" checked style="margin-left:0px"><span class="t">中北美国联</span><input type="checkbox" checked style="margin-left:0px"><span class="t">美金杯</span><input type="checkbox" checked style="margin-left:0px"><span class="t">世界杯</span><input type="checkbox" checked style="margin-left:0px"><span class="t">北美预选</span></div></div>
<div class="sum" style="top:750px">近<span class="r">10</span>场,胜<span class="n">3</span>平<span class="n">4</span>负<span class="n">3</span>, 胜率:<span class="box" style="background:#007700">30%</span> 赢率:<span class="box" style="background:#007700">30%</span> 大:<span style="color:#3333ff">60%</span> 单率:<span style="color:#008000">30%</span></div>
</body></html>
